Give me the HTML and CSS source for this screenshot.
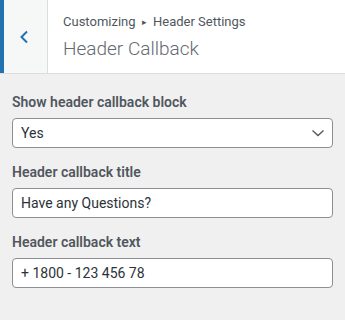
FILE: index.html
```html
<!DOCTYPE html>
<html lang="en">
<head>
    <meta charset="UTF-8">
    <title>Header Callback</title>
    <link rel="stylesheet" href="styles.css">
</head>
<body>
<div class="panel">
    <div class="panel-head">
        <button class="back" type="button" aria-label="Back">
            <svg width="10" height="14" viewBox="0 0 10 14">
                <path d="M8 1.5 L2.5 7 L8 12.5" fill="none" stroke="#2271b1" stroke-width="2"/>
            </svg>
        </button>
        <div class="head-title">
            <div class="crumbs">Customizing <span class="sep">&#9656;</span> Header Settings</div>
            <h3>Header Callback</h3>
        </div>
    </div>

    <ul class="controls">
        <li class="control">
            <label class="control-title">Show header callback block</label>
            <div class="select">
                <span>Yes</span>
                <svg width="14" height="8" viewBox="0 0 14 8">
                    <path d="M1.5 1.5 L7 6.5 L12.5 1.5" fill="none" stroke="#50575e" stroke-width="1.3"/>
                </svg>
            </div>
        </li>
        <li class="control">
            <label class="control-title">Header callback title</label>
            <input class="field" type="text" value="Have any Questions?">
        </li>
        <li class="control">
            <label class="control-title">Header callback text</label>
            <input class="field" type="text" value="+ 1800 - 123 456 78">
        </li>
    </ul>
</div>
</body>
</html>
```

FILE: styles.css
```css
body, ul, li, h3 {
    margin: 0;
    padding: 0;
    list-style: none;
}

body {
    background: #f0f0f1;
    font-family: Roboto, "Noto Sans", sans-serif;
    color: #3c434a;
}

.panel-head {
    display: flex;
    height: 73px;
    background: #fff;
    border-bottom: 1px solid #dcdcde;
}

.back {
    width: 48px;
    padding: 0 4px 0 0;
    margin: 0;
    background: #f6f7f7;
    border: 0;
    border-left: 4px solid #2271b1;
    border-right: 1px solid #dcdcde;
    display: flex;
    align-items: center;
    justify-content: center;
    cursor: pointer;
}

.head-title {
    padding: 12px 15px;
}

.crumbs {
    font-size: 13px;
    line-height: 20px;
    color: #50575e;
}

.crumbs .sep {
    font-size: 9px;
    margin: 0 3px;
    vertical-align: 1px;
}

.head-title h3 {
    font-size: 19px;
    font-weight: 300;
    line-height: 27px;
    margin-top: 3px;
    color: #646970;
}

.controls {
    padding: 18px 12px;
}

.control {
    margin-bottom: 14px;
}

.control-title {
    display: block;
    font-size: 14px;
    font-weight: 600;
    line-height: 20px;
    color: #50575e;
    margin-bottom: 6px;
}

.select, .field {
    box-sizing: border-box;
    width: 100%;
    height: 30px;
    background: #fff;
    border: 1px solid #8c8f94;
    border-radius: 4px;
    font-family: inherit;
    font-size: 14px;
    color: #2c3338;
}

.select {
    display: flex;
    align-items: center;
    justify-content: space-between;
    padding: 0 7px 0 8px;
}

.field {
    display: block;
    padding: 0 8px;
    margin: 0;
}
```
